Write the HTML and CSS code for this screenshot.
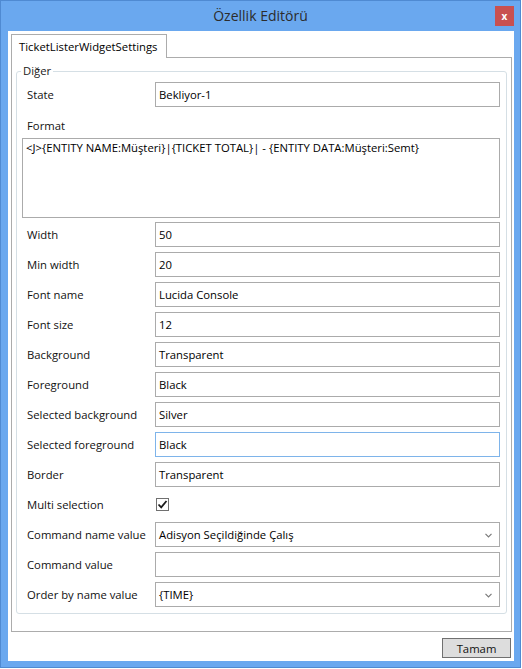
FILE: index.html
```html
<!DOCTYPE html>
<html>
<head>
<meta charset="utf-8">
<link rel="stylesheet" href="styles.css">
</head>
<body>
<div class="window">
  <div class="titlebar">
    <div class="title">Özellik Editörü</div>
    <div class="close">x</div>
  </div>
  <div class="content">
    <div class="tabs">
      <div class="tab">TicketListerWidgetSettings</div>
    </div>
    <div class="panel">
      <fieldset class="group">
        <legend>Diğer</legend>
        <div class="row"><div class="label">State</div><div class="field">Bekliyor-1</div></div>
        <div class="label format-label">Format</div>
        <div class="textarea">&lt;J&gt;{ENTITY NAME:Müşteri}|{TICKET TOTAL}| - {ENTITY DATA:Müşteri:Semt}</div>
        <div class="row"><div class="label">Width</div><div class="field">50</div></div>
        <div class="row"><div class="label">Min width</div><div class="field">20</div></div>
        <div class="row"><div class="label">Font name</div><div class="field">Lucida Console</div></div>
        <div class="row"><div class="label">Font size</div><div class="field">12</div></div>
        <div class="row"><div class="label">Background</div><div class="field">Transparent</div></div>
        <div class="row"><div class="label">Foreground</div><div class="field">Black</div></div>
        <div class="row"><div class="label">Selected background</div><div class="field">Silver</div></div>
        <div class="row"><div class="label">Selected foreground</div><div class="field focused">Black</div></div>
        <div class="row"><div class="label">Border</div><div class="field">Transparent</div></div>
        <div class="row"><div class="label">Multi selection</div>
          <div class="checkcell"><div class="checkbox"><svg width="11" height="11" viewBox="0 0 11 11"><path d="M1.5 5.5 L4.2 8.3 L9.5 2" fill="none" stroke="#1a1a1a" stroke-width="1.8"/></svg></div></div>
        </div>
        <div class="row"><div class="label">Command name value</div><div class="field select"><span>Adisyon Seçildiğinde Çalış</span><svg class="chev" width="7" height="5" viewBox="0 0 7 5"><path d="M0.5 0.8 L3.5 3.8 L6.5 0.8" fill="none" stroke="#7a7a7a" stroke-width="1.2"/></svg></div></div>
        <div class="row"><div class="label">Command value</div><div class="field"></div></div>
        <div class="row last"><div class="label">Order by name value</div><div class="field select"><span>{TIME}</span><svg class="chev" width="7" height="5" viewBox="0 0 7 5"><path d="M0.5 0.8 L3.5 3.8 L6.5 0.8" fill="none" stroke="#7a7a7a" stroke-width="1.2"/></svg></div></div>
      </fieldset>
    </div>
    <div class="button">Tamam</div>
  </div>
</div>
</body>
</html>
```
FILE: styles.css
```css
* { box-sizing: border-box; }
html, body { margin: 0; padding: 0; background: #ffffff; }
body {
  font-family: "Open Sans", "Noto Sans", "DejaVu Sans", sans-serif;
  font-size: 11.3px;
  color: #000;
}
.window {
  width: 521px;
  height: 668px;
  background: #6aa8ef;
  border: 1px solid #4f8ad2;
  display: flex;
  flex-direction: column;
}
.titlebar {
  height: 30px;
  display: grid;
  grid-template-columns: 1fr auto 1fr;
}
.title {
  grid-column: 2;
  align-self: center;
  font-size: 14px;
  color: #2c2c2c;
  line-height: 18px;
  margin-top: -1px;
}
.close {
  grid-column: 3;
  justify-self: end;
  align-self: start;
  margin-top: 5px;
  margin-right: 6px;
  width: 19px;
  height: 20px;
  background: #c85050;
  color: #fff;
  font-weight: bold;
  font-size: 10px;
  line-height: 10px;
  display: flex;
  align-items: center;
  justify-content: center;
}
.content {
  margin-left: 7px;
  width: 506px;
  height: 630px;
  background: #fff;
  padding: 3px 2px 0 3px;
  display: flex;
  flex-direction: column;
}
.tabs { display: flex; }
.tab {
  width: 156px;
  height: 24px;
  border: 1px solid #acacac;
  border-bottom: none;
  padding: 0 0 0 7px;
  background: #fff;
  margin-bottom: -1px;
  position: relative;
  z-index: 1;
  display: flex;
  align-items: center;
  white-space: nowrap;
}
.panel {
  height: 575px;
  border: 1px solid #acacac;
  padding: 5px 4px;
}
.group {
  margin: 0;
  min-width: 0;
  border: 1px solid #d5dfe5;
  border-radius: 3px;
  padding: 3px 6px 6px 5px;
}
.group legend {
  padding: 0 2px;
  margin-left: -1px;
  line-height: 16px;
  color: #1a1a1a;
}
.row {
  display: grid;
  grid-template-columns: 133px 1fr;
  height: 25px;
  margin-bottom: 5px;
}
.row.last { margin-bottom: 0; }
.label {
  padding-left: 5px;
  display: flex;
  align-items: center;
  color: #111;
  white-space: nowrap;
}
.format-label { height: 26px; }
.field {
  border: 1px solid #ababab;
  padding: 0 3px;
  display: flex;
  align-items: center;
  height: 25px;
  white-space: nowrap;
}
.field.focused { border-color: #7eb4ea; }
.field.select { justify-content: space-between; padding-right: 7px; }
.chev { display: block; margin-top: 1px; }
.textarea {
  height: 80px;
  border: 1px solid #ababab;
  padding: 1px 3px;
  line-height: 16px;
  margin-bottom: 4px;
  white-space: nowrap;
}
.checkcell { display: flex; align-items: center; }
.checkbox {
  width: 13px;
  height: 13px;
  margin-left: 1px;
  border: 1px solid #707070;
  background: #fff;
  display: flex;
  align-items: center;
  justify-content: center;
}
.checkbox svg { display: block; }
.button {
  align-self: flex-end;
  margin-top: 6px;
  margin-right: 1px;
  width: 69px;
  height: 20px;
  border: 1px solid #707070;
  background: #dddddd;
  display: flex;
  align-items: center;
  justify-content: center;
  color: #111;
}
```
